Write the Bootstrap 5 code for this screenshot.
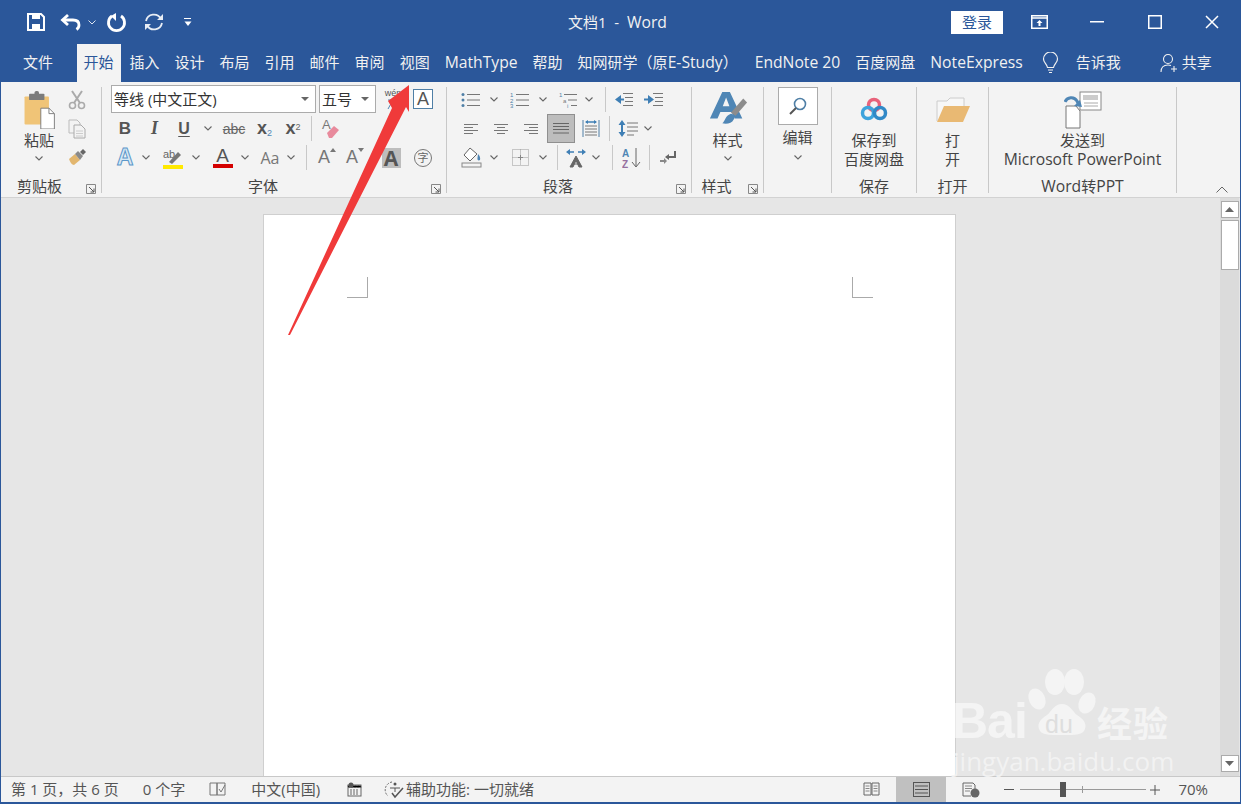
<!DOCTYPE html>
<html lang="zh-CN">
<head>
  <meta charset="UTF-8" />
  <title>文档1 - Word</title>
  <link href="https://cdn.jsdelivr.net/npm/bootstrap@5.3.0/dist/css/bootstrap.min.css" rel="stylesheet">
  <style>
    html, body { height: 100%; }
    body {
      width: 1241px; height: 804px; overflow: hidden; position: relative;
      font-family: "Open Sans", "Noto Sans CJK SC", sans-serif;
      font-size: 15px; color: #444; background: #2b579a;
    }
    .lat { font-size: 15.7px; }
    .titlebar { height: 44px; color: #fff; position: relative; }
    .qat { padding-left: 24px; }
    .doc-title { position: absolute; left: 568px; top: 11px; font-size: 15px; white-space: pre; color: #f2f2f2; }
    .login { width: 52px; height: 23px; background: #fff; color: #2b579a; font-size: 15px; line-height: 23px; text-align: center; }
    .win-btn { width: 57.5px; height: 44px; }
    .tabs { height: 38px; color: #f1f1f1; padding-left: 15.5px; white-space: nowrap; }
    .tab { padding: 0 7.5px; line-height: 37px; }
    .tab.active { background: #f3f3f3; color: #2b579a; padding: 0 7px; margin-left: 16px; margin-right: 1.5px; }
    .ribbon { height: 116px; background: #f3f3f3; margin: 0 1px; padding: 5px 0 0 1px; border-bottom: 1px solid #d2d2d2; position: relative; }
    .rgroup { height: 106px; border-right: 1px solid #c8c8c8; position: relative; flex: none; }
    .g1 { width: 100px; } .g2 { width: 345px; padding-left: 9px; } .g3 { width: 245px; padding-left: 10px; }
    .g4 { width: 72px; } .g5 { width: 68px; } .g6 { width: 85px; } .g7 { width: 72px; } .g8 { width: 188px; }
    .rbody { height: 87px; margin-top: -2px; }
    .rrow { height: 29px; }
    .cell { height: 29px; flex: none; display: flex; align-items: center; justify-content: center; line-height: 1; }
    .c12 { width: 12px; } .c14 { width: 14px; } .c18 { width: 18px; } .c20 { width: 20px; } .c28 { width: 28px; }
    .c29 { width: 29px; } .c30 { width: 30px; } .c31 { width: 31px; } .c32 { width: 32px; }
    .ml2 { margin-left: 2px; } .ml3 { margin-left: 3px; } .ml5 { margin-left: 5px; } .ml6 { margin-left: 6px; }
    .ml7 { margin-left: 7px; } .ml10 { margin-left: 10px; } .ml15 { margin-left: 15px; } .ml18 { margin-left: 18px; } .ml19 { margin-left: 19px; }
    .ml22 { margin-left: 22px; } .ml27 { margin-left: 27px; }
    .mt2 { margin-top: 2px; } .mt3 { margin-top: 3px; } .mt6 { margin-top: 6px; }
    .vsep { width: 1px; height: 25px; background: #c8c8c8; flex: none; align-self: center; }
    .combo { height: 28px; background: #fff; border: 1px solid #ababab; padding: 0 6px 0 2px; color: #333; flex: none; }
    .combo-font { width: 205px; } .combo-size { width: 57px; margin-left: 3px; }
    .rlabel { position: absolute; left: 0; right: 0; top: 89px; height: 20px; line-height: 20px; text-align: center; color: #444; }
    .pr22 { padding-right: 22px; }
    .launch { position: absolute; top: 97px; right: 5px; display: block; }
    .big { text-align: center; line-height: 19px; color: #444; white-space: nowrap; }
    .big-ico { height: 46px; padding-top: 4px; display: flex; align-items: center; justify-content: center; flex: none; }
    .paste-col { width: 46px; margin-left: 14px; }
    .small-col { width: 30px; }
    .fx-b { font: 700 17px "Liberation Sans", sans-serif; color: #555; }
    .fx-i { font: italic 700 18px "Liberation Serif", serif; color: #555; }
    .fx-u { font: 700 16px "Liberation Sans", sans-serif; color: #555; text-decoration: underline; text-underline-offset: 2px; }
    .fx-s { font: 14px "Liberation Sans", sans-serif; color: #666; text-decoration: line-through; }
    .fx-x { font: 700 18px "Liberation Sans", sans-serif; color: #555; }
    .fx-x sub, .fx-x sup { font-size: 9px; font-weight: 400; color: #4f86b5; }
    .fx-x sup { color: #666; }
    .fx-a { font: 400 20px "Liberation Sans", sans-serif; color: #666; }
    .fx-glow { color: #d7e9f6; -webkit-text-stroke: 1px #5c97c9; font-size: 23px; font-weight: 700; }
    .fx-aa { font: 400 16px "Open Sans", sans-serif; color: #777; }
    .fx-sm { font-size: 18px; color: #777; }
    .fx-hl { background: #bdbdbd; color: #555; width: 19px; height: 20px; font-weight: 700; font-size: 21px; text-align: center; line-height: 20px; }
    .fx-color { display: flex; flex-direction: column; align-items: center; line-height: 1; }
    .fx-color b { font: 400 19px/17px "Liberation Sans", sans-serif; color: #555; }
    .fx-color i { display: block; width: 20px; height: 4px; background: #d40000; }
    .fx-circle { width: 18px; height: 18px; border: 1px solid #777; border-radius: 50%; font-size: 11px; line-height: 16px; text-align: center; color: #666; }
    .box-a { width: 20px; height: 20px; border: 1px solid #4f7fa6; background: #fff; font: 400 18px/18px "Liberation Sans", sans-serif; text-align: center; color: #555; }
    .wen { font-size: 9px; color: #555; line-height: 9px; font-family: "Liberation Sans", sans-serif; }
    .selected { background: #bdbdbd; outline: 1px solid #8f8f8f; outline-offset: -1px; }
    .search-box { width: 40px; height: 38px; background: #fff; border: 1px solid #ababab; flex: none; }
    .collapse-btn { position: absolute; left: 1215px; top: 104px; }
    .workspace { height: 578px; background: #e6e6e6; margin: 0 1px; }
    .doc-area { padding: 16px 0 0 262px; overflow: hidden; }
    .sheet { width: 693px; height: 570px; background: #fff; border: 1px solid #cfcfcf; padding: 62px 82px 0 83px; }
    .crop { width: 21px; height: 21px; border-bottom: 1px solid #aaa; }
    .crop.l { border-right: 1px solid #aaa; }
    .crop.r { border-left: 1px solid #aaa; }
    .vscroll { width: 19px; background: #dbdbdb; margin-right: 1px; padding-top: 3px; }
    .sb-btn { width: 18px; height: 17px; background: #fff; border: 1px solid #ababab; margin: 0 auto; flex: none; }
    .sb-thumb { width: 18px; height: 50px; background: #fff; border: 1px solid #ababab; margin: 2px auto 0; }
    .statusbar { height: 26px; background: #f3f3f3; border-top: 1px solid #c8c8c8; margin: 0 1px; padding-left: 10px; color: #555; white-space: nowrap; }
    .statusbar .s-item { line-height: 23px; }
    .view-btn { width: 50px; height: 25px; }
    .view-btn.active { background: #c0c0c0; }
    .zoom-track { width: 126px; height: 1px; background: #999; position: relative; margin: 0 4px 0 6px; }
    .zoom-thumb { position: absolute; left: 40px; top: -7px; width: 6px; height: 15px; background: #555; }
    .zoom-tick { position: absolute; left: 62px; top: -3px; width: 1px; height: 7px; background: #999; }
    .watermark { position: absolute; left: 951px; top: 668px; width: 226px; height: 108px; color: #f4f4f4; pointer-events: none; }
    .wm-bai { position: absolute; left: 1px; top: 31px; font: 700 50px/44px "Liberation Sans", sans-serif; letter-spacing: -1px; }
    .wm-jy { position: absolute; left: 146px; top: 32px; font: 700 35px/44px "Noto Sans CJK SC", sans-serif; letter-spacing: 1px; }
    .wm-url { position: absolute; left: 2px; top: 78px; font: 400 26px/30px "Open Sans", sans-serif; opacity: .9; }
    .wm-paw { position: absolute; left: 76px; top: 0; }
    .wm-du { position: absolute; left: 94px; top: 41px; font: 400 25px/30px "Liberation Sans", sans-serif; color: #dedede; }
    .red-arrow { position: absolute; left: 0; top: 0; pointer-events: none; }
  </style>
</head>
<body>

  <svg width="0" height="0" class="position-absolute">
    <symbol id="chev" viewBox="0 0 8 5"><path d="M.5.5 4 4 7.5.5" fill="none" stroke="#666" stroke-width="1.100"/></symbol>
    <symbol id="launch" viewBox="0 0 10 10"><path d="M.5 9.500v-9h9v9z" fill="none" stroke="#888"/><path d="M3 3l5 5M8 4.500V8H4.500" fill="none" stroke="#555"/></symbol>
    <symbol id="lines-l" viewBox="0 0 16 12"><path d="M1 1.500h14M1 4.500h9M1 7.500h14M1 10.500h9" stroke="#777" fill="none"/></symbol>
    <symbol id="lines-c" viewBox="0 0 16 12"><path d="M1 1.500h14M4 4.500h8M1 7.500h14M4 10.500h8" stroke="#777" fill="none"/></symbol>
    <symbol id="lines-r" viewBox="0 0 16 12"><path d="M1 1.500h14M6 4.500h9M1 7.500h14M6 10.500h9" stroke="#777" fill="none"/></symbol>
  </svg>

  <div class="titlebar d-flex align-items-center">
    <div class="qat d-flex align-items-center">
      <svg width="24" height="20" viewBox="0 0 24 20" class="me-2"><path d="M4 2h13l3 3v13H4z" fill="none" stroke="#fff" stroke-width="2"/><rect x="8" y="2" width="8" height="5" fill="#fff"/><rect x="8" y="12" width="8" height="6" fill="#fff"/></svg>
      <svg width="24" height="20" viewBox="0 0 24 20" class="ms-1"><path d="M8 3 2.500 8 8 13" fill="none" stroke="#fff" stroke-width="2.800"/><path d="M3 8h10c4 0 6 2 6 5 0 2-1 3.500-2.500 4.500" fill="none" stroke="#fff" stroke-width="2.800"/></svg>
      <svg width="8" height="5" class="ms-1"><path d="M.5.5 4 4 7.500.5" fill="none" stroke="#dfe6f1"/></svg>
      <svg width="22" height="22" viewBox="0 0 22 22" class="ml10"><path d="M6 5a8 8 0 1 0 9 0" fill="none" stroke="#fff" stroke-width="2.800"/><path d="M10 2v8L5 5z" fill="#fff"/></svg>
      <svg width="22" height="22" viewBox="0 0 22 22" class="ml15"><path d="M3 10a8 8 0 0 1 15-2M19 12a8 8 0 0 1-15 2" fill="none" stroke="#e8edf5" stroke-width="1.800"/><path d="M20 3v6h-6zM2 19v-6h6z" fill="#e8edf5"/></svg>
      <svg width="8" height="10" viewBox="0 0 8 10" class="ml19"><path d="M0 1.500h7" stroke="#fff"/><path d="M.5 4.500h7L4 9z" fill="#fff"/></svg>
    </div>
    <span class="doc-title">文档1  -  <span class="lat">Word</span></span>
    <div class="ms-auto d-flex align-items-center">
      <div class="login">登录</div>
      <div class="win-btn d-flex align-items-center justify-content-center ms-2"><svg width="17" height="14" viewBox="0 0 17 14"><rect x=".75" y=".75" width="15.500" height="12.500" fill="none" stroke="#fff" stroke-width="1.500"/><path d="M1 3h15" stroke="#fff" stroke-width="1.500"/><path d="M8.500 5l-3 3h2v3h2V8h2z" fill="#fff"/></svg></div>
      <div class="win-btn d-flex align-items-center justify-content-center"><svg width="14" height="2"><rect width="14" height="1.500" fill="#fff"/></svg></div>
      <div class="win-btn d-flex align-items-center justify-content-center"><svg width="14" height="14"><rect x=".75" y=".75" width="12.500" height="12.500" fill="none" stroke="#fff" stroke-width="1.500"/></svg></div>
      <div class="win-btn d-flex align-items-center justify-content-center"><svg width="14" height="14"><path d="M1 1l12 12M13 1 1 13" stroke="#fff" stroke-width="1.500"/></svg></div>
    </div>
  </div>

  <div class="tabs d-flex align-items-stretch">
    <span class="tab">文件</span>
    <span class="tab active">开始</span>
    <span class="tab">插入</span>
    <span class="tab">设计</span>
    <span class="tab">布局</span>
    <span class="tab">引用</span>
    <span class="tab">邮件</span>
    <span class="tab">审阅</span>
    <span class="tab">视图</span>
    <span class="tab lat">MathType</span>
    <span class="tab">帮助</span>
    <span class="tab">知网研学（原<span class="lat">E-Study</span>）</span>
    <span class="tab lat ml2">EndNote 20</span>
    <span class="tab">百度网盘</span>
    <span class="tab lat">NoteExpress</span>
    <span class="tab d-flex align-items-center ms-1"><svg width="17" height="22" viewBox="0 0 17 22"><path d="M5.500 15.500C5 12 1.500 11 1.500 7a7 7 0 0 1 14 0c0 4-3.500 5-4 8.500z" fill="none" stroke="#f1f1f1" stroke-width="1.200"/><path d="M6 18h5M7 20.500h3" stroke="#f1f1f1" stroke-width="1.200"/></svg></span>
    <span class="tab ml2">告诉我</span>
    <span class="tab d-flex align-items-center ms-4 pe-1"><svg width="18" height="20" viewBox="0 0 18 20"><circle cx="8" cy="6" r="4.500" fill="none" stroke="#f1f1f1" stroke-width="1.100"/><path d="M1 19c0-5 3-7 7-7 1 0 2 .2 3 .6M14 13v6M11 16h6" fill="none" stroke="#f1f1f1" stroke-width="1.100"/></svg></span>
    <span class="tab ps-0">共享</span>
  </div>

  <div class="ribbon d-flex">
    <!-- 剪贴板 -->
    <div class="rgroup g1">
      <div class="rbody d-flex">
        <div class="paste-col d-flex flex-column align-items-center">
          <div class="big-ico"><svg width="34" height="38" viewBox="0 0 36 42"><rect x="2" y="6" width="27" height="31" rx="1" fill="#f0c477"/><rect x="7" y="3" width="17" height="7" rx="1" fill="#7c7c7c"/><rect x="13" y="0" width="5" height="5" rx="2" fill="#7c7c7c"/><path d="M20 19h9l6 6v17H20z" fill="#fff" stroke="#777"/><path d="M29 19v6h6" fill="none" stroke="#777"/></svg></div>
          <div class="big">粘贴</div>
          <svg width="8" height="5" class="mt6"><use href="#chev"/></svg>
        </div>
        <div class="small-col d-flex flex-column">
          <div class="cell c30"><svg width="18" height="20" viewBox="0 0 18 20"><path d="M4 1l8 12M14 1 6 13" stroke="#aaa" stroke-width="2" fill="none"/><circle cx="4.500" cy="15.500" r="3" fill="none" stroke="#aaa" stroke-width="1.600"/><circle cx="13.500" cy="15.500" r="3" fill="none" stroke="#aaa" stroke-width="1.600"/></svg></div>
          <div class="cell c30"><svg width="18" height="20" viewBox="0 0 18 20"><path d="M1 1h8l3 3v10H1z" fill="#f3f3f3" stroke="#bbb"/><path d="M6 6h7l4 4v9H6z" fill="#f3f3f3" stroke="#aaa"/><path d="M8 12h7M8 14.500h7M8 17h7" stroke="#ccc"/></svg></div>
          <div class="cell c30"><svg width="18" height="17" viewBox="0 0 18 17"><path d="M1 10 7 5l5 6-6 5c-2 0-4-3-5-6z" fill="#e2b66e"/><path d="M7 5l3-3 5 5-3 4z" fill="#8a8a8a"/><path d="M12 3l3-3 3 3-3 3z" fill="#666"/></svg></div>
        </div>
      </div>
      <div class="rlabel pe-4">剪贴板</div>
      <svg class="launch" width="10" height="10"><use href="#launch"/></svg>
    </div>

    <!-- 字体 -->
    <div class="rgroup g2">
      <div class="rbody">
        <div class="rrow d-flex align-items-start">
          <div class="combo combo-font d-flex align-items-center justify-content-between"><span>等线 (中文正文)</span><svg width="8" height="4"><path d="M0 0h8L4 4z" fill="#666"/></svg></div>
          <div class="combo combo-size d-flex align-items-center justify-content-between"><span>五号</span><svg width="8" height="4"><path d="M0 0h8L4 4z" fill="#666"/></svg></div>
          <div class="cell c20 ml7 flex-column"><span class="wen">wén</span><svg width="14" height="12" viewBox="0 0 14 12"><path d="M2 2h10M7 2 2 11M5 2l7 9" stroke="#4f86b5" fill="none"/></svg></div>
          <div class="ml10 mt-1"><div class="box-a">A</div></div>
        </div>
        <div class="rrow d-flex">
          <div class="cell c28"><span class="fx-b">B</span></div>
          <div class="cell c31"><span class="fx-i">I</span></div>
          <div class="cell c28"><span class="fx-u">U</span></div>
          <div class="cell c20"><svg width="8" height="5"><use href="#chev"/></svg></div>
          <div class="cell c32"><span class="fx-s">abc</span></div>
          <div class="cell c29"><span class="fx-x">x<sub>2</sub></span></div>
          <div class="cell c28"><span class="fx-x">x<sup>2</sup></span></div>
          <div class="vsep ms-1"></div>
          <div class="cell c30 ms-1"><svg width="20" height="22" viewBox="0 0 20 22"><text x="1" y="11" font-family="Liberation Sans" font-size="13" fill="#777">A</text><path d="M6 15 13 8l5 4-7 8H8z" fill="#e88a9c"/></svg></div>
        </div>
        <div class="rrow d-flex">
          <div class="cell c28"><span class="fx-a fx-glow">A</span></div>
          <div class="cell c14"><svg width="8" height="5"><use href="#chev"/></svg></div>
          <div class="cell c32 ms-1"><svg width="22" height="22" viewBox="0 0 22 22"><text x="1" y="11" font-family="Liberation Sans" font-size="11" fill="#666">ab</text><path d="M7 15l9-10 3 3-9 9z" fill="#777"/><rect x="1" y="18" width="20" height="4" fill="#ffe900"/></svg></div>
          <div class="cell c14"><svg width="8" height="5"><use href="#chev"/></svg></div>
          <div class="cell c31 ms-1"><span class="fx-color"><b>A</b><i></i></span></div>
          <div class="cell c14"><svg width="8" height="5"><use href="#chev"/></svg></div>
          <div class="cell c28 ms-1"><span class="fx-aa">Aa</span></div>
          <div class="cell c14"><svg width="8" height="5"><use href="#chev"/></svg></div>
          <div class="vsep ms-2"></div>
          <div class="cell c28 ml6"><span class="fx-a fx-sm">A</span><svg width="6" height="4" class="mb-3"><path d="M0 4h6L3 0z" fill="#777"/></svg></div>
          <div class="cell c28"><span class="fx-a fx-sm">A</span><svg width="6" height="4" class="mb-3"><path d="M0 0h6L3 4z" fill="#777"/></svg></div>
          <div class="cell c28 ms-2"><div class="fx-hl">A</div></div>
          <div class="cell c28 ms-1"><div class="fx-circle">字</div></div>
        </div>
      </div>
      <div class="rlabel pr22">字体</div>
      <svg class="launch" width="10" height="10"><use href="#launch"/></svg>
    </div>

    <!-- 段落 -->
    <div class="rgroup g3">
      <div class="rbody">
        <div class="rrow d-flex">
          <div class="cell c28"><svg width="20" height="16" viewBox="0 0 20 16"><path d="M6 2.500h13M6 8h13M6 13.500h13" stroke="#777"/><circle cx="2" cy="2.500" r="1.500" fill="#4f7fa6"/><circle cx="2" cy="8" r="1.500" fill="#4f7fa6"/><circle cx="2" cy="13.500" r="1.500" fill="#4f7fa6"/></svg></div>
          <div class="cell c18"><svg width="8" height="5"><use href="#chev"/></svg></div>
          <div class="cell c28 ml3"><svg width="20" height="18" viewBox="0 0 20 18"><path d="M6 3.500h13M6 9h13M6 14.500h13" stroke="#777"/><text y="6" font-size="6" fill="#4f7fa6" font-family="Liberation Sans">1</text><text y="11.500" font-size="6" fill="#4f7fa6" font-family="Liberation Sans">2</text><text y="17" font-size="6" fill="#4f7fa6" font-family="Liberation Sans">3</text></svg></div>
          <div class="cell c18"><svg width="8" height="5"><use href="#chev"/></svg></div>
          <div class="cell c28 ml3"><svg width="20" height="18" viewBox="0 0 20 18"><path d="M5 3.500h13M9 9h9M12 14.500h6" stroke="#777"/><text y="6" font-size="6" fill="#4f7fa6" font-family="Liberation Sans">1</text><text x="4" y="11.500" font-size="6" fill="#777" font-family="Liberation Sans">a</text><text x="8" y="17" font-size="6" fill="#4f7fa6" font-family="Liberation Sans">i</text></svg></div>
          <div class="cell c12"><svg width="8" height="5"><use href="#chev"/></svg></div>
          <div class="vsep ml10"></div>
          <div class="cell c28 ms-1"><svg width="20" height="15" viewBox="0 0 20 15"><path d="M9 1.500h10M11 5.500h8M11 9.500h8M9 13.500h10" stroke="#777"/><path d="M7 3v9L1 7.500z" fill="#3f7fb5"/><path d="M4 7.500h6" stroke="#3f7fb5" stroke-width="2"/></svg></div>
          <div class="cell c28 ml2"><svg width="20" height="15" viewBox="0 0 20 15"><path d="M9 1.500h10M11 5.500h8M11 9.500h8M9 13.500h10" stroke="#777"/><path d="M4 3v9l6-4.500z" fill="#3f7fb5"/><path d="M0 7.500h6" stroke="#3f7fb5" stroke-width="2"/></svg></div>
        </div>
        <div class="rrow d-flex">
          <div class="cell c28"><svg width="16" height="12"><use href="#lines-l"/></svg></div>
          <div class="cell c28 ml2"><svg width="16" height="12"><use href="#lines-c"/></svg></div>
          <div class="cell c28 ml2"><svg width="16" height="12"><use href="#lines-r"/></svg></div>
          <div class="cell c28 ml2 selected"><svg width="16" height="13" viewBox="0 0 16 13"><path d="M0 1.500h16M0 4.500h16M0 7.500h16M0 11h16" stroke="#666"/></svg></div>
          <div class="cell c28 ml2"><svg width="18" height="19" viewBox="0 0 18 19"><path d="M1 1v17M17 1v17" stroke="#4f7fa6"/><path d="M3 7h12M3 10h12M3 13h12M3 16h12" stroke="#777"/><path d="M4 3h10" stroke="#3f7fb5" stroke-width="1.500"/><path d="M3 3l3-2v4zM15 3l-3-2v4z" fill="#3f7fb5"/></svg></div>
          <div class="vsep ms-1"></div>
          <div class="cell c28 ms-1"><svg width="20" height="19" viewBox="0 0 20 19"><path d="M9 4h11M9 8h11M9 12h11M9 16h7" stroke="#777"/><path d="M4 1 .5 6h7zM4 18 .5 13h7z" fill="#3f7fb5"/><path d="M4 5v9" stroke="#3f7fb5" stroke-width="2"/></svg></div>
          <div class="cell c12"><svg width="8" height="5"><use href="#chev"/></svg></div>
        </div>
        <div class="rrow d-flex">
          <div class="cell c28"><svg width="21" height="21" viewBox="0 0 21 21"><rect x="1" y="16" width="19" height="4" fill="#f3f3f3" stroke="#888"/><path d="M9 1 3 8l6 6 7-7z" fill="#fff" stroke="#666"/><path d="M17 7c2 2 2.500 4 2 6-1.500 1-3 0-2.500-2z" fill="#4f86b5"/></svg></div>
          <div class="cell c18"><svg width="8" height="5"><use href="#chev"/></svg></div>
          <div class="cell c28 ml3"><svg width="17" height="17" viewBox="0 0 17 17"><path d="M.5.5h16v16H.5zM8.500.5v16M.5 8.500h16" fill="none" stroke="#999" stroke-dasharray="1 1"/><path d="M8.500 6v5M6 8.500h5" stroke="#888"/></svg></div>
          <div class="cell c18"><svg width="8" height="5"><use href="#chev"/></svg></div>
          <div class="vsep ml5"></div>
          <div class="cell c28 ms-1"><svg width="22" height="20" viewBox="0 0 22 20"><path d="M11 8 5 19h3l3-6.500 3 6.500h3zM8 16h6" fill="#666" stroke="#666"/><path d="M3 4h6M13 4h6" stroke="#3f7fb5" stroke-width="1.500"/><path d="M1 4l4-3v6zM21 4l-4-3v6z" fill="#3f7fb5"/></svg></div>
          <div class="cell c12"><svg width="8" height="5"><use href="#chev"/></svg></div>
          <div class="vsep ml10"></div>
          <div class="cell c28 ms-1"><svg width="19" height="22" viewBox="0 0 19 22"><text x="0" y="10" font-family="Liberation Sans" font-size="10" font-weight="700" fill="#4f86b5">A</text><text x="0" y="21" font-family="Liberation Sans" font-size="10" font-weight="700" fill="#96709f">Z</text><path d="M14 1v18M10 15l4 5 4-5" fill="none" stroke="#666"/></svg></div>
          <div class="vsep ms-1"></div>
          <div class="cell c28 ms-1"><svg width="18" height="15" viewBox="0 0 18 15"><path d="M16 1v6H9" fill="none" stroke="#666" stroke-width="2"/><path d="M10 4l-4 3 4 3z" fill="#666"/><path d="M1 11h5" stroke="#888" stroke-width="2"/><path d="M5 8l3 3-3 3z" fill="#888"/></svg></div>
        </div>
      </div>
      <div class="rlabel pr22">段落</div>
      <svg class="launch" width="10" height="10"><use href="#launch"/></svg>
    </div>

    <!-- 样式 -->
    <div class="rgroup g4">
      <div class="rbody d-flex flex-column align-items-center">
        <div class="big-ico"><svg width="40" height="40" viewBox="0 0 42 42"><path d="M15 2h8l13 28h-8l-3-7H13l-3 7H2zM15.500 17h7L19 8z" fill="#4f86b5" fill-rule="evenodd"/><path d="M24 24 37 9l4 4-12 14z" fill="#8c8c8c"/><path d="M24 25c3 0 5 3 3 6-2 4-7 5-12 4 3-2 3-8 9-10z" fill="#4f86b5"/></svg></div>
        <div class="big">样式</div>
        <svg width="8" height="5" class="mt6"><use href="#chev"/></svg>
      </div>
      <div class="rlabel pr22">样式</div>
      <svg class="launch" width="10" height="10"><use href="#launch"/></svg>
    </div>

    <!-- 编辑 -->
    <div class="rgroup g5">
      <div class="rbody d-flex flex-column align-items-center">
        <div class="search-box d-flex align-items-center justify-content-center mt2"><svg width="20" height="20" viewBox="0 0 20 20"><circle cx="12" cy="8" r="5.500" fill="none" stroke="#4f7fa6" stroke-width="1.600"/><path d="M8 12l-6 6" stroke="#555" stroke-width="2"/></svg></div>
        <div class="big mt3">编辑</div>
        <svg width="8" height="5" class="mt-2"><use href="#chev"/></svg>
      </div>
    </div>

    <!-- 保存 -->
    <div class="rgroup g6">
      <div class="rbody d-flex flex-column align-items-center">
        <div class="big-ico"><svg width="28" height="26" viewBox="0 0 28 26"><circle cx="14" cy="8" r="5.500" fill="none" stroke="#e8627a" stroke-width="3.500"/><circle cx="8" cy="16" r="5.500" fill="none" stroke="#3ea3dc" stroke-width="3.500"/><circle cx="20" cy="16" r="5.500" fill="none" stroke="#3189c7" stroke-width="3.500"/></svg></div>
        <div class="big">保存到<br>百度网盘</div>
      </div>
      <div class="rlabel">保存</div>
    </div>

    <!-- 打开 -->
    <div class="rgroup g7">
      <div class="rbody d-flex flex-column align-items-center">
        <div class="big-ico"><svg width="36" height="28" viewBox="0 0 36 28"><path d="M2 25V5h10l3-3h14v8" fill="#f7f7f7" stroke="#ccc"/><path d="M2 26 9 10h26l-7 16z" fill="#e9b973"/></svg></div>
        <div class="big">打<br>开</div>
      </div>
      <div class="rlabel">打开</div>
    </div>

    <!-- Word转PPT -->
    <div class="rgroup g8">
      <div class="rbody d-flex flex-column align-items-center">
        <div class="big-ico"><svg width="38" height="38" viewBox="0 0 38 38"><rect x="16" y="1" width="21" height="18" fill="#fff" stroke="#888"/><rect x="19" y="4" width="15" height="5" fill="#ccc"/><path d="M20 12h14M20 15h14" stroke="#aaa"/><path d="M2 15h10l4 5v17H2z" fill="#fff" stroke="#777"/><path d="M1 11c2-5 9-6 12-1l2 4" fill="none" stroke="#4f86b5" stroke-width="3"/><path d="M10 15l8 1-2-7z" fill="#4f86b5"/></svg></div>
        <div class="big">发送到<br><span class="lat">Microsoft PowerPoint</span></div>
      </div>
      <div class="rlabel"><span class="lat">Word</span>转<span class="lat">PPT</span></div>
    </div>

    <svg class="collapse-btn" width="12" height="7"><path d="M.5 6.500 6 1l5.500 5.500" fill="none" stroke="#666"/></svg>
  </div>

  <div class="workspace d-flex">
    <div class="doc-area flex-grow-1">
      <div class="sheet d-flex justify-content-between">
        <div class="crop l"></div>
        <div class="crop r"></div>
      </div>
    </div>
    <div class="vscroll d-flex flex-column">
      <div class="sb-btn d-flex align-items-center justify-content-center"><svg width="9" height="5"><path d="M0 5h9L4.500 0z" fill="#666"/></svg></div>
      <div class="sb-thumb"></div>
      <div class="sb-btn d-flex align-items-center justify-content-center mt-auto mb-1"><svg width="9" height="5"><path d="M0 0h9L4.500 5z" fill="#666"/></svg></div>
    </div>
  </div>

  <div class="statusbar d-flex align-items-center">
    <span class="s-item">第 1 页，共 6 页</span>
    <span class="s-item ms-4">0 个字</span>
    <svg width="18" height="15" viewBox="0 0 18 15" class="ms-4"><path d="M1 1h7v12H1zM8 1h8v12H8z" fill="none" stroke="#777"/><path d="M10 7l2 3 4-7" fill="none" stroke="#777"/></svg>
    <span class="s-item ms-4">中文(中国)</span>
    <svg width="15" height="15" viewBox="0 0 15 15" class="ml27"><rect x="1" y="3" width="13" height="11" fill="none" stroke="#666"/><path d="M1 5.500h13v-2H1zM3 8h9M3 10h9M3 12h9" stroke="#666" stroke-dasharray="2 1"/><circle cx="4" cy="3" r="2.500" fill="#555"/></svg>
    <svg width="22" height="18" viewBox="0 0 22 18" class="ml22"><path d="M8 1a8 8 0 0 0-4 14" fill="none" stroke="#666" stroke-dasharray="2 1.500"/><circle cx="11" cy="3" r="1.500" fill="#555"/><path d="M6 7h10M11 7v4" stroke="#555"/><path d="M8 12l3 4 8-9" fill="none" stroke="#555" stroke-width="1.500"/></svg>
    <span class="s-item">辅助功能: 一切就绪</span>

    <div class="ms-auto d-flex align-items-center">
      <div class="view-btn d-flex align-items-center justify-content-center"><svg width="17" height="15" viewBox="0 0 17 15"><path d="M1 1h7v12H1zM9 1h7v12H9z" fill="none" stroke="#666"/><path d="M2.500 4h4M2.500 6.500h4M2.500 9h4M10.500 4h4M10.500 6.500h4M10.500 9h4" stroke="#888"/></svg></div>
      <div class="view-btn active d-flex align-items-center justify-content-center"><svg width="17" height="15" viewBox="0 0 17 15"><rect x=".5" y=".5" width="16" height="14" fill="none" stroke="#555"/><path d="M2 4h13M2 7.500h13M2 11h13" stroke="#555"/></svg></div>
      <div class="view-btn d-flex align-items-center justify-content-center"><svg width="18" height="16" viewBox="0 0 18 16"><path d="M1 1h10l2 2v6M1 1v13h8" fill="none" stroke="#666"/><path d="M3 4h7M3 6.500h7M3 9h5" stroke="#888"/><circle cx="13" cy="11" r="4.500" fill="#666"/></svg></div>
      <svg width="10" height="2" class="ms-2"><rect width="10" height="1" fill="#555"/></svg>
      <div class="zoom-track"><div class="zoom-thumb"></div><div class="zoom-tick"></div></div>
      <svg width="10" height="10"><path d="M5 0v10M0 5h10" stroke="#555"/></svg>
      <span class="s-item ml18 me-4 pe-2">70%</span>
    </div>
  </div>

  <div class="watermark">
    <svg class="wm-paw" width="72" height="70" viewBox="0 0 72 70"><ellipse cx="28" cy="14" rx="10" ry="13" fill="#f4f4f4"/><ellipse cx="47" cy="14" rx="10" ry="13" fill="#f4f4f4"/><ellipse cx="10" cy="31" rx="8" ry="11" fill="#f4f4f4" transform="rotate(-25 10 31)"/><ellipse cx="60" cy="35" rx="8" ry="11" fill="#f4f4f4" transform="rotate(25 60 35)"/><path d="M35 36c-8 0-10 7-15 11-6 4-10 8-8 14 2 6 9 6 23 6s21 0 23-6c2-6-2-10-8-14-5-4-7-11-15-11z" fill="#f4f4f4"/></svg>
    <div class="wm-bai">Bai</div>
    <div class="wm-du">du</div>
    <div class="wm-jy">经验</div>
    <div class="wm-url">jingyan.baidu.com</div>
  </div>

  <svg class="red-arrow" width="1241" height="804" viewBox="0 0 1241 804"><path d="M288 335 392 108 388 101 409 85 409 112 406 107 290 335z" fill="#f03a3a"/></svg>

  <script src="https://cdn.jsdelivr.net/npm/bootstrap@5.3.0/dist/js/bootstrap.bundle.min.js"></script>
</body>
</html>
